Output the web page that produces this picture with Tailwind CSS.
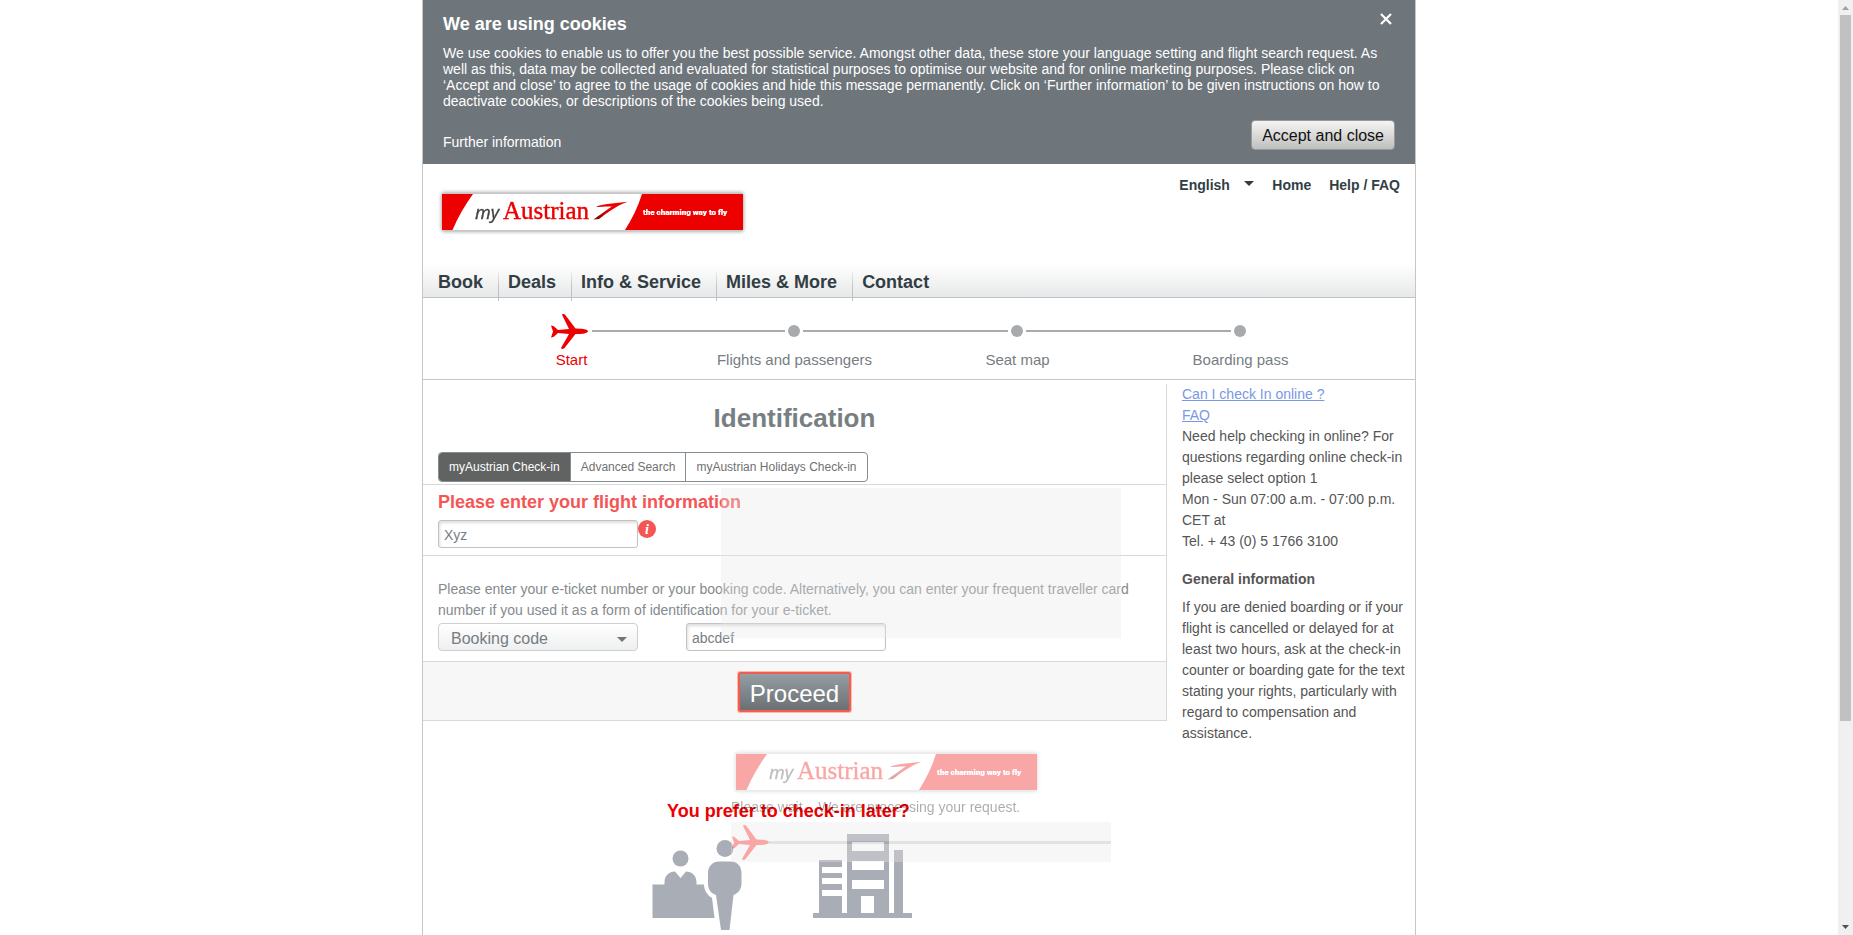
<!DOCTYPE html>
<html lang="en">
<head>
<meta charset="utf-8">
<meta name="viewport" content="width=device-width, initial-scale=1">
<title>myAustrian Check-in</title>
<script src="https://cdn.jsdelivr.net/npm/@tailwindcss/browser@4"></script>
</head>
<body class="flex h-screen overflow-hidden bg-white font-['Liberation_Sans',Arial,sans-serif] text-sm text-[#555]">

<div class="min-w-0 flex-1">
  <div class="relative mx-auto min-h-full max-w-[994px] border-x border-[#c6c6c6]">

    <section class="bg-[#6e757b] px-5 pt-[10px] pb-[14px] text-white">
      <div class="flex items-start justify-between">
        <h2 class="text-lg leading-7 font-bold">We are using cookies</h2>
        <button type="button" aria-label="Close" class="mt-[2px] mr-[2px] p-px">
          <svg class="size-3" viewBox="0 0 12 12" stroke="#fff" stroke-width="2.200"><path d="M1 1L11 11M11 1L1 11"/></svg>
        </button>
      </div>
      <p class="mt-[7px] max-w-[945px] leading-4">We use cookies to enable us to offer you the best possible service. Amongst other data, these store your language setting and flight search request. As well as this, data may be collected and evaluated for statistical purposes to optimise our website and for online marketing purposes. Please click on ‘Accept and close’ to agree to the usage of cookies and hide this message permanently. Click on ‘Further information’ to be given instructions on how to deactivate cookies, or descriptions of the cookies being used.</p>
      <div class="mt-[11px] flex items-end justify-between">
        <a href="#" class="leading-4">Further information</a>
        <button type="button" class="h-[30px] rounded border border-[#999] bg-linear-to-b from-[#f5f5f5] to-[#bfbfbd] px-[10px] pt-[2px] text-base leading-[26px] text-[#111]">Accept and close</button>
      </div>
    </section>

    <header class="flex h-25 items-start justify-between pr-[15px] pl-[18px]">
      <a href="#" aria-label="myAustrian" class="mt-7">
        <svg class="h-[39px] w-[302px] drop-shadow-[0_0_2px_#888]" viewBox="0 0 302 39">
          <defs>
            <linearGradient id="swoosh" x1="0" y1="1" x2="1" y2="0">
              <stop offset="0.1" stop-color="#8c0000"/><stop offset="0.5" stop-color="#ec0000"/>
            </linearGradient>
          </defs>
          <g id="logo">
            <rect x="1" y="1" width="301" height="38" fill="#c6c6c6"/>
            <rect x="1" y="2" width="301" height="36" fill="#fff"/>
            <path d="M1 2H32C24 13 17 25 11.500 38H1z" fill="#ec0000"/>
            <path d="M201 2H302V38H184C191 27 197 15 201 2z" fill="#ec0000"/>
            <text x="34" y="27" font-family="'Noto Sans'" font-style="italic" font-size="18" fill="#444" stroke="#444" stroke-width="0.3">my</text>
            <text x="62" y="27" font-family="'Liberation Serif'" font-size="25" fill="#ec0000" stroke="#ec0000" stroke-width="0.4">Austrian</text>
            <path d="M155 15C161 11.500 175 11.500 186.500 9.800C175 14 166 21 158 27L152.500 27.500C160 22 167 17 171 14.500C165 14.300 159 15 155 15z" fill="url(#swoosh)"/>
            <text x="202" y="23" font-family="Roboto" font-weight="900" font-size="8" fill="#fff" stroke="#fff" stroke-width="0.2">the charming way to fly</text>
          </g>
        </svg>
      </a>
      <nav class="mt-[11px] flex font-bold text-[#323e44]">
        <div class="relative mr-4">
          <select aria-label="Language" class="h-5 w-[77px] appearance-none font-bold"><option>English</option></select>
          <svg class="pointer-events-none absolute top-[6px] right-[2px] h-[5px] w-[10px]" viewBox="0 0 10 5" fill="#323e44"><path d="M0 0H10L5 5z"/></svg>
        </div>
        <a href="#" class="mr-[18px]">Home</a>
        <a href="#">Help / FAQ</a>
      </nav>
    </header>

    <nav class="flex h-[34px] border-b border-[#bfc1c3] bg-linear-to-b from-white to-[#e7e8e9] pl-[6px] text-lg font-bold text-[#323e44]">
      <a href="#" class="px-[9px] pt-1 pr-[15px] leading-7">Book</a>
      <span class="mt-2 -mb-1 w-px bg-linear-to-b from-[#eee] to-[#bfc1c3] to-50%"></span>
      <a href="#" class="px-[9px] pt-1 pr-[15px] leading-7">Deals</a>
      <span class="mt-2 -mb-1 w-px bg-linear-to-b from-[#eee] to-[#bfc1c3] to-50%"></span>
      <a href="#" class="px-[9px] pt-1 pr-[15px] leading-7">Info &amp; Service</a>
      <span class="mt-2 -mb-1 w-px bg-linear-to-b from-[#eee] to-[#bfc1c3] to-50%"></span>
      <a href="#" class="px-[9px] pt-1 pr-[15px] leading-7">Miles &amp; More</a>
      <span class="mt-2 -mb-1 w-px bg-linear-to-b from-[#eee] to-[#bfc1c3] to-50%"></span>
      <a href="#" class="px-[9px] pt-1 pr-[15px] leading-7">Contact</a>
    </nav>

    <section aria-label="Progress" class="border-b border-[#c6c6c6] pt-4 pb-[9px]">
      <div class="flex h-[35px] items-center gap-[3px] pr-[169px] pl-[128px]">
        <svg class="h-[35px] w-[37px] fill-[#ec0000]" viewBox="0 0 37 35">
          <path id="plane" d="M37 17.300C37 15.800 33 14.800 29.500 14.800L24.500 14.600L14.500 1.200C13.500 0 11 -.3 11 .8L18 15L7 16L2.500 12L0 11.600L2 17.500L0 23.500L2.500 23L7 19L18 20L10 34C10 35.200 12.500 35.200 13.500 34L24.500 20L29.500 19.900C33 19.900 37 18.800 37 17.300z"/>
        </svg>
        <span class="mb-px ml-px h-[2px] flex-[193] bg-[#a8abae]"></span>
        <span class="mb-px size-3 rounded-full bg-[#a8abae]"></span>
        <span class="mb-px h-[2px] flex-[205] bg-[#a8abae]"></span>
        <span class="mb-px size-3 rounded-full bg-[#a8abae]"></span>
        <span class="mb-px h-[2px] flex-[205] bg-[#a8abae]"></span>
        <span class="mb-px size-3 rounded-full bg-[#a8abae]"></span>
      </div>
      <ol class="mt-px grid grid-cols-4 pr-[63px] pl-[37px] text-center text-[15px] leading-5 text-[#777d82]">
        <li class="text-[#ec0000]">Start</li><li>Flights and passengers</li><li>Seat map</li><li>Boarding pass</li>
      </ol>
    </section>

    <div class="flex">
      <main class="min-w-0 flex-1">
        <form class="mt-1 border-r border-[#d9d9d9] text-[#848a8e]">
          <div class="border-b border-[#d9d9d9] px-[15px] pt-4 pb-[2px]">
            <h1 class="text-center text-[26px] leading-9 font-bold text-[#777f83]">Identification</h1>
            <div class="mt-4 inline-flex h-[30px] overflow-hidden rounded border border-[#848d93] align-top text-xs text-[#717171]">
              <button type="button" class="bg-[#616362] px-[10px] text-white">myAustrian Check-in</button>
              <button type="button" class="border-l border-[#848d93] px-[10px]">Advanced Search</button>
              <button type="button" class="border-l border-[#848d93] px-[10px]">myAustrian Holidays Check-in</button>
            </div>
          </div>

          <div class="border-b border-[#d9d9d9] px-[15px] pt-1 pb-[7px]">
            <label for="name" class="block text-lg leading-[26px] font-bold text-[#f45656]">Please enter your flight information</label>
            <div class="mt-[5px] flex items-start">
              <input id="name" type="text" value="Xyz" class="h-7 w-50 rounded-[3px] border border-[#c2c2c2] bg-white px-[5px] pt-[2px] text-[#777d82] shadow-[inset_1px_2px_3px_#ddd]">
              <button type="button" aria-label="Information" class="size-[18px]">
                <svg viewBox="0 0 18 18"><circle cx="9" cy="9" r="9" fill="#f45656"/><text x="9" y="13.500" text-anchor="middle" font-family="'Liberation Serif'" font-style="italic" font-weight="bold" font-size="14" fill="#fff">i</text></svg>
              </button>
            </div>
          </div>

          <div class="border-b border-[#d9d9d9] px-[15px] pt-[23px] pb-[10px]">
            <p class="leading-[21px]">Please enter your e-ticket number or your booking code. Alternatively, you can enter your frequent traveller card number if you used it as a form of identification for your e-ticket.</p>
            <div class="mt-[2px] flex gap-12">
              <div class="relative">
                <select aria-label="Type of identification" class="h-7 w-50 appearance-none rounded-[4px] border border-[#cfcfcf] bg-linear-to-b from-white to-[#eeeff0] pt-[3px] pl-3 text-base leading-6 text-[#777d82]"><option>Booking code</option></select>
                <svg class="pointer-events-none absolute top-[14px] right-[11px] h-[5px] w-[10px]" viewBox="0 0 10 5" fill="#6e757b"><path d="M0 0H10L5 5z"/></svg>
              </div>
              <input type="text" aria-label="Booking code" value="abcdef" class="h-7 w-50 rounded-[3px] border border-[#c2c2c2] bg-white px-[5px] pt-[2px] text-[#777d82] shadow-[inset_1px_2px_3px_#ddd]">
            </div>
          </div>

          <div class="flex h-[59px] justify-center border-b border-[#d9d9d9] bg-[#f7f7f7] pt-[10px]">
            <button type="button" class="h-10 rounded-[2px] border-2 border-[#f45b55] bg-linear-to-b from-[#959ea4] to-[#6c7073] px-[10px] pt-1 text-2xl leading-8 text-white shadow-[0_0_0_1px_#f8bfa8]">Proceed</button>
          </div>
        </form>

        <section class="mt-[77px] pl-[229px]">
          <h3 class="pl-[15px] text-lg leading-[27px] font-bold text-[#ec0000]">You prefer to check-in later?</h3>
          <div class="mt-[9px] flex items-start gap-[71px]">
            <a href="#" aria-label="Check-in counter" class="mt-[6px]">
              <svg class="size-[90px]" viewBox="0 0 90 90" fill="#a9adb6">
                <circle cx="28.500" cy="18.500" r="8"/><circle cx="73" cy="8.500" r="8.500"/>
                <path d="M0.500 44.500H12.500V42C12.500 36 17 31.500 23 31.500L28.500 38L34 31.500C40 31.500 44.500 36 44.500 42V44.500H52C52 50 55 55 60 58L62.500 78H0.500z"/>
                <path d="M56 33C56 26 61 21.500 67 21.500H79C85 21.500 89.500 26 89.500 33V43C89.500 50 86 53 81.500 55L77.500 90H69L64 55C59 53 56 50 56 43z"/>
              </svg>
            </a>
            <a href="#" aria-label="City check-in">
              <svg class="h-[84px] w-[99px]" viewBox="0 0 99 84" fill="#a9adb6">
                <path d="M0 79H6V26H29V33H9V39H29V44H9V50H29V56H9V62H29V79H34V0H76V79H81V16H90V79H99V84H0zM39 8V17H71V8zM39 27V36H71V27zM39 46V55H71V46zM48 62V79H61V62z" fill-rule="evenodd"/>
              </svg>
            </a>
          </div>
        </section>
      </main>

      <aside class="w-[248px] shrink-0 pt-1 pr-2 pl-[15px] leading-[21px]">
        <a href="#" class="text-[#7b97e3] underline">Can I check In online ?</a><br>
        <a href="#" class="text-[#7b97e3] underline">FAQ</a>
        <p>Need help checking in online? For questions regarding online check-in please select option 1<br>Mon - Sun 07:00 a.m. - 07:00 p.m. CET at<br>Tel. + 43 (0) 5 1766 3100</p>
        <h4 class="mt-[17px] font-bold">General information</h4>
        <p class="mt-[7px]">If you are denied boarding or if your flight is cancelled or delayed for at least two hours, ask at the check-in counter or boarding gate for the text stating your rights, particularly with regard to compensation and assistance.</p>
      </aside>
    </div>

    <div class="pointer-events-none absolute top-[488px] left-[298px] w-100 opacity-35">
      <div class="h-[150px] bg-[#e8e8e8]"></div>
      <div class="pt-[114px] pl-[10px]">
        <svg class="ml-1 h-[39px] w-[302px] drop-shadow-[0_0_2px_#888]" viewBox="0 0 302 39"><use href="#logo"/></svg>
        <p class="mt-[6px] leading-5 text-[#111]">Please wait... We are processing your request.</p>
        <div class="mt-[5px] flex h-10 w-[380px] items-center bg-[#e8e8e8]">
          <svg class="ml-px h-[35px] w-[37px] fill-[#ec0000]" viewBox="0 0 37 35"><use href="#plane"/></svg>
          <span class="h-[3px] flex-1 bg-[#a8abae]"></span>
        </div>
      </div>
    </div>
  </div>
</div>

<div aria-hidden="true" class="flex w-[15px] shrink-0 flex-col bg-[#f0f0f0]">
  <svg class="h-[15px]" viewBox="0 0 15 15" fill="#a0a0a0"><path d="M4 10L7.500 6L11 10z"/></svg>
  <div class="flex-1 px-[2px]"><div class="bg-[#c1c1c1]" style="height:78%"></div></div>
  <svg class="h-[15px]" viewBox="0 0 15 15" fill="#505050"><path d="M4 5L7.500 9L11 5z"/></svg>
</div>
</body>
</html>
